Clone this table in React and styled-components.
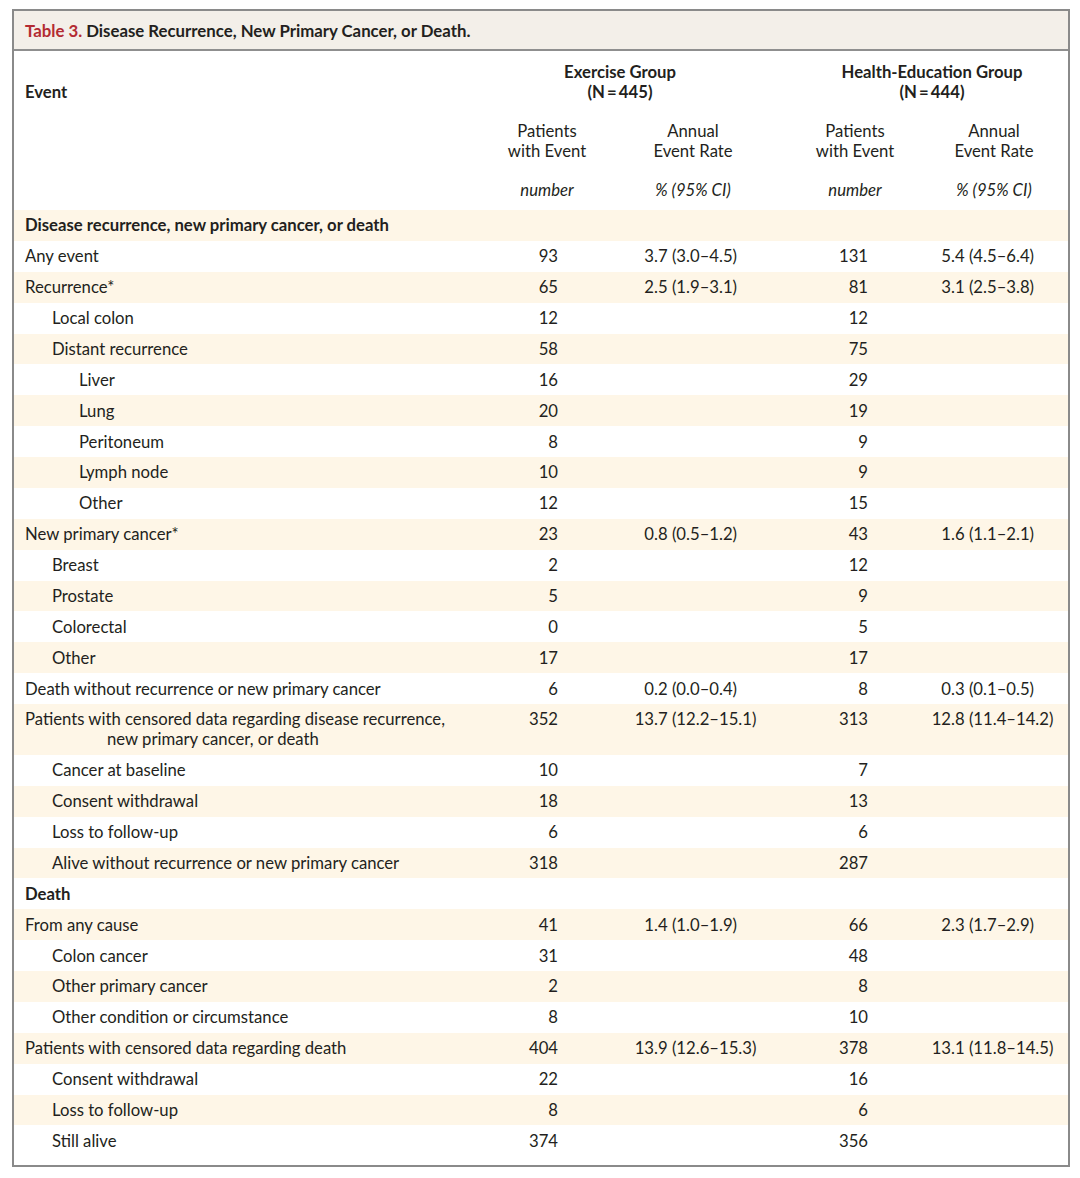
import React from "react";
import styled, { createGlobalStyle } from "styled-components";

const Global = createGlobalStyle`
  html, body { margin: 0; padding: 0; background: #ffffff; }
  body {
    font-family: Lato, "Open Sans", "Liberation Sans", sans-serif;
    color: #231f20;
    -webkit-font-smoothing: antialiased;
  }
`;

const Page = styled.div`
  padding: 9px 10px 11px 12px;
`;

const Frame = styled.div`
  width: 1058px;
  box-sizing: border-box;
  border: 2px solid #8a8a8a;
  background: #ffffff;
`;

const TitleBar = styled.div`
  height: 38px;
  display: flex;
  align-items: center;
  padding-left: 11px;
  background: #f3efe9;
  border-bottom: 2px solid #8f8f8f;
  font-size: 16.8px;
  font-weight: 700;
  color: #231f20;
`;

const TitleLabel = styled.span`
  color: #b32b33;
  margin-right: 4px;
`;

const cols = "476px 114px 178px 146px 132px 1fr";

const Head = styled.div`
  display: grid;
  grid-template-columns: ${cols};
  row-gap: 19px;
  padding: 11px 0 10px;
  font-size: 16.7px;
  line-height: 20px;
`;

const EventHead = styled.div`
  grid-column: 1;
  grid-row: 1;
  align-self: end;
  padding-left: 11px;
  font-weight: 700;
`;

const GroupHead = styled.div`
  grid-row: 1;
  grid-column: ${(p) => p.$span};
  text-align: center;
  font-weight: 700;
  padding-left: ${(p) => p.$pl || 0}px;
  padding-right: ${(p) => p.$pr || 0}px;
`;

const SubHead = styled.div`
  grid-column: ${(p) => p.$col};
  text-align: center;
  font-style: ${(p) => (p.$italic ? "italic" : "normal")};
`;

const Body = styled.div`
  padding-bottom: 9px;
`;

const Row = styled.div`
  display: grid;
  grid-template-columns: ${cols};
  padding: 5.45px 0;
  font-size: 16.7px;
  line-height: 20px;
  background: ${(p) => (p.$striped ? "#fef6e7" : "#ffffff")};
`;

const EventCell = styled.div`
  padding-left: ${(p) => 11 + p.$level * 27}px;
  font-weight: ${(p) => (p.$bold ? 700 : 400)};
  white-space: nowrap;
`;

const HangLine = styled.span`
  display: block;
  padding-left: ${(p) => p.$indent}px;
`;

const NumCell = styled.div`
  text-align: right;
  padding-right: ${(p) => p.$pr}px;
`;

const RateCell = styled.div`
  white-space: nowrap;
`;

const IntPart = styled.span`
  display: inline-block;
  width: ${(p) => p.$w}px;
  text-align: right;
`;

function Rate({ value, w }) {
  if (!value) return <RateCell />;
  const dot = value.indexOf(".");
  return (
    <RateCell>
      <IntPart $w={w}>{value.slice(0, dot)}</IntPart>
      {value.slice(dot)}
    </RateCell>
  );
}

const rows = [
  { label: "Disease recurrence, new primary cancer, or death", bold: true },
  { label: "Any event", level: 0, p1: "93", r1: "3.7 (3.0–4.5)", p2: "131", r2: "5.4 (4.5–6.4)" },
  { label: "Recurrence*", level: 0, p1: "65", r1: "2.5 (1.9–3.1)", p2: "81", r2: "3.1 (2.5–3.8)" },
  { label: "Local colon", level: 1, p1: "12", p2: "12" },
  { label: "Distant recurrence", level: 1, p1: "58", p2: "75" },
  { label: "Liver", level: 2, p1: "16", p2: "29" },
  { label: "Lung", level: 2, p1: "20", p2: "19" },
  { label: "Peritoneum", level: 2, p1: "8", p2: "9" },
  { label: "Lymph node", level: 2, p1: "10", p2: "9" },
  { label: "Other", level: 2, p1: "12", p2: "15" },
  { label: "New primary cancer*", level: 0, p1: "23", r1: "0.8 (0.5–1.2)", p2: "43", r2: "1.6 (1.1–2.1)" },
  { label: "Breast", level: 1, p1: "2", p2: "12" },
  { label: "Prostate", level: 1, p1: "5", p2: "9" },
  { label: "Colorectal", level: 1, p1: "0", p2: "5" },
  { label: "Other", level: 1, p1: "17", p2: "17" },
  { label: "Death without recurrence or new primary cancer", level: 0, p1: "6", r1: "0.2 (0.0–0.4)", p2: "8", r2: "0.3 (0.1–0.5)" },
  {
    label: ["Patients with censored data regarding disease recurrence,", "new primary cancer, or death"],
    level: 0,
    p1: "352",
    r1: "13.7 (12.2–15.1)",
    p2: "313",
    r2: "12.8 (11.4–14.2)",
  },
  { label: "Cancer at baseline", level: 1, p1: "10", p2: "7" },
  { label: "Consent withdrawal", level: 1, p1: "18", p2: "13" },
  { label: "Loss to follow-up", level: 1, p1: "6", p2: "6" },
  { label: "Alive without recurrence or new primary cancer", level: 1, p1: "318", p2: "287" },
  { label: "Death", bold: true },
  { label: "From any cause", level: 0, p1: "41", r1: "1.4 (1.0–1.9)", p2: "66", r2: "2.3 (1.7–2.9)" },
  { label: "Colon cancer", level: 1, p1: "31", p2: "48" },
  { label: "Other primary cancer", level: 1, p1: "2", p2: "8" },
  { label: "Other condition or circumstance", level: 1, p1: "8", p2: "10" },
  { label: "Patients with censored data regarding death", level: 0, p1: "404", r1: "13.9 (12.6–15.3)", p2: "378", r2: "13.1 (11.8–14.5)" },
  { label: "Consent withdrawal", level: 1, p1: "22", p2: "16" },
  { label: "Loss to follow-up", level: 1, p1: "8", p2: "6" },
  { label: "Still alive", level: 1, p1: "374", p2: "356" },
];

export default function App() {
  return (
    <Page>
      <Global />
      <Frame>
        <TitleBar>
          <TitleLabel>Table 3.</TitleLabel>
          Disease Recurrence, New Primary Cancer, or Death.
        </TitleBar>
        <Head>
          <EventHead>Event</EventHead>
          <GroupHead $span="2 / 4" $pr={32}>
            Exercise Group
            <br />
            (N{"\u2009"}={"\u2009"}445)
          </GroupHead>
          <GroupHead $span="4 / 6" $pl={22}>
            Health-Education Group
            <br />
            (N{"\u2009"}={"\u2009"}444)
          </GroupHead>
          <SubHead $col={2}>
            Patients
            <br />
            with Event
          </SubHead>
          <SubHead $col={3}>
            Annual
            <br />
            Event Rate
          </SubHead>
          <SubHead $col={4}>
            Patients
            <br />
            with Event
          </SubHead>
          <SubHead $col={5}>
            Annual
            <br />
            Event Rate
          </SubHead>
          <SubHead $col={2} $italic>number</SubHead>
          <SubHead $col={3} $italic>% (95% CI)</SubHead>
          <SubHead $col={4} $italic>number</SubHead>
          <SubHead $col={5} $italic>% (95% CI)</SubHead>
        </Head>
        <Body>
          {rows.map((r, i) => (
            <Row key={i} $striped={i % 2 === 0}>
              <EventCell $level={r.level || 0} $bold={r.bold}>
                {Array.isArray(r.label) ? (
                  <>
                    <HangLine $indent={0}>{r.label[0]}</HangLine>
                    <HangLine $indent={82}>{r.label[1]}</HangLine>
                  </>
                ) : (
                  r.label
                )}
              </EventCell>
              <NumCell $pr={46}>{r.p1}</NumCell>
              <Rate value={r.r1} w={50} />
              <NumCell $pr={60}>{r.p2}</NumCell>
              <Rate value={r.r2} w={23} />
            </Row>
          ))}
        </Body>
      </Frame>
    </Page>
  );
}
